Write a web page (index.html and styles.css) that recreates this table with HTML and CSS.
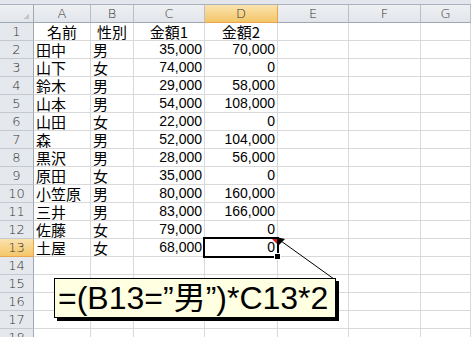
FILE: index.html
```html
<!DOCTYPE html>
<html lang="ja">
<head>
<meta charset="utf-8">
<link rel="stylesheet" href="styles.css">
</head>
<body>
<div class="app">
  <div class="topband"></div>
  <div class="sheet">
    <div class="hd corner"></div>
    <div class="hd col">A</div><div class="hd col">B</div><div class="hd col">C</div><div class="hd col sel">D</div><div class="hd col">E</div><div class="hd col">F</div><div class="hd col">G</div>

    <div class="hd row">1</div><div class="c ctr">名前</div><div class="c ctr">性別</div><div class="c ctr">金額1</div><div class="c ctr">金額2</div><div class="c"></div><div class="c"></div><div class="c"></div>
    <div class="hd row">2</div><div class="c">田中</div><div class="c">男</div><div class="c num">35,000</div><div class="c num">70,000</div><div class="c"></div><div class="c"></div><div class="c"></div>
    <div class="hd row">3</div><div class="c">山下</div><div class="c">女</div><div class="c num">74,000</div><div class="c num">0</div><div class="c"></div><div class="c"></div><div class="c"></div>
    <div class="hd row">4</div><div class="c">鈴木</div><div class="c">男</div><div class="c num">29,000</div><div class="c num">58,000</div><div class="c"></div><div class="c"></div><div class="c"></div>
    <div class="hd row">5</div><div class="c">山本</div><div class="c">男</div><div class="c num">54,000</div><div class="c num">108,000</div><div class="c"></div><div class="c"></div><div class="c"></div>
    <div class="hd row">6</div><div class="c">山田</div><div class="c">女</div><div class="c num">22,000</div><div class="c num">0</div><div class="c"></div><div class="c"></div><div class="c"></div>
    <div class="hd row">7</div><div class="c">森</div><div class="c">男</div><div class="c num">52,000</div><div class="c num">104,000</div><div class="c"></div><div class="c"></div><div class="c"></div>
    <div class="hd row">8</div><div class="c">黒沢</div><div class="c">男</div><div class="c num">28,000</div><div class="c num">56,000</div><div class="c"></div><div class="c"></div><div class="c"></div>
    <div class="hd row">9</div><div class="c">原田</div><div class="c">女</div><div class="c num">35,000</div><div class="c num">0</div><div class="c"></div><div class="c"></div><div class="c"></div>
    <div class="hd row">10</div><div class="c">小笠原</div><div class="c">男</div><div class="c num">80,000</div><div class="c num">160,000</div><div class="c"></div><div class="c"></div><div class="c"></div>
    <div class="hd row">11</div><div class="c">三井</div><div class="c">男</div><div class="c num">83,000</div><div class="c num">166,000</div><div class="c"></div><div class="c"></div><div class="c"></div>
    <div class="hd row">12</div><div class="c">佐藤</div><div class="c">女</div><div class="c num">79,000</div><div class="c num">0</div><div class="c"></div><div class="c"></div><div class="c"></div>
    <div class="hd row sel">13</div><div class="c">土屋</div><div class="c">女</div><div class="c num">68,000</div><div class="c num active">0<span class="cmark"></span><span class="handle"></span></div><div class="c"></div><div class="c"></div><div class="c"></div>
    <div class="hd row">14</div><div class="c"></div><div class="c"></div><div class="c"></div><div class="c"></div><div class="c"></div><div class="c"></div><div class="c"></div>
    <div class="hd row">15</div><div class="c"></div><div class="c"></div><div class="c"></div><div class="c"></div><div class="c"></div><div class="c"></div><div class="c"></div>
    <div class="hd row">16</div><div class="c"></div><div class="c"></div><div class="c"></div><div class="c"></div><div class="c"></div><div class="c"></div><div class="c"></div>
    <div class="hd row">17</div><div class="c"></div><div class="c"></div><div class="c"></div><div class="c"></div><div class="c"></div><div class="c"></div><div class="c"></div>
    <div class="hd row">18</div><div class="c"></div><div class="c"></div><div class="c"></div><div class="c"></div><div class="c"></div><div class="c"></div><div class="c"></div>
  </div>

  <svg class="leader" width="471" height="337" viewBox="0 0 471 337">
    <line x1="281" y1="241" x2="334" y2="279" stroke="#000" stroke-width="1"/>
    <polygon points="276,237 285,239 279,245" fill="#000"/>
  </svg>
  <div class="callout">=(B13=”男”)*C13*2</div>
</div>
</body>
</html>
```

FILE: styles.css
```css
html, body {
  margin: 0;
  padding: 0;
  background: #fff;
}
.app {
  position: relative;
  width: 471px;
  height: 337px;
  overflow: hidden;
  font-family: "Noto Sans CJK JP", "DejaVu Sans", sans-serif;
}
.topband {
  height: 4px;
  background: #e3e7ed;
  border-bottom: 1px solid #a9b1bc;
}
.sheet {
  display: grid;
  grid-template-columns: 34px 57px 43px 71px 73px 71px 72px 50px;
  grid-auto-rows: 18px;
}
.sheet > div {
  box-sizing: border-box;
  border-right: 1px solid #d9d9d9;
  border-bottom: 1px solid #d9d9d9;
  font-size: 15px;
  line-height: 17px;
  white-space: nowrap;
}
.hd {
  background: #e5e8ed;
  color: #333;
  text-align: center;
  font-family: "DejaVu Sans", sans-serif;
  font-weight: 200;
  font-size: 13px !important;
  border-right-color: #c4c9d0 !important;
  border-bottom-color: #c4c9d0 !important;
}
.hd.col {
  background: linear-gradient(#eef0f3, #e2e5ea);
  border-bottom-color: #9fa7b2 !important;
  border-right-color: #b9bfc7 !important;
}
.hd.row {
  border-right-color: #9fa7b2 !important;
}
.hd.corner {
  background:
    linear-gradient(135deg, transparent 0 72%, #c3c7cd 72%) no-repeat 20px 5px / 9px 9px,
    linear-gradient(#eef0f3, #e2e5ea);
  border-bottom-color: #9fa7b2 !important;
  border-right-color: #9fa7b2 !important;
}
.hd.sel {
  background: linear-gradient(#fbe3ae, #f3c668);
  border-right-color: #eaa54a !important;
  border-bottom-color: #eaa54a !important;
}
.c {
  color: #000;
  padding-left: 2px;
  position: relative;
}
.ctr {
  text-align: center;
  padding-left: 0;
}
.num {
  text-align: right;
  padding-right: 2px;
  padding-left: 0;
  font-family: "Liberation Sans", sans-serif;
  font-size: 14px !important;
}
.active {
  z-index: 2;
}
.active::before {
  content: "";
  position: absolute;
  left: -2px;
  top: -2px;
  right: -2px;
  bottom: -2px;
  border: 2px solid #000;
  pointer-events: none;
}
.handle {
  position: absolute;
  right: -4px;
  bottom: -4px;
  width: 5px;
  height: 5px;
  background: #000;
  border: 1px solid #fff;
}
.cmark {
  position: absolute;
  right: 0;
  top: 0;
  width: 0;
  height: 0;
  border-top: 5px solid #e02020;
  border-left: 5px solid transparent;
}
.leader {
  position: absolute;
  left: 0;
  top: 0;
  z-index: 3;
}
.callout {
  position: absolute;
  left: 54px;
  top: 278px;
  width: 277px;
  height: 38px;
  background: #ffffe1;
  border: 1px solid #000;
  box-shadow: 3px 3px 0 #000;
  font-family: "Liberation Sans", "Noto Sans CJK JP", sans-serif;
  font-size: 32px;
  line-height: 38px;
  padding-left: 3px;
  box-sizing: content-box;
  white-space: nowrap;
  overflow: hidden;
  color: #000;
  z-index: 4;
}
```
